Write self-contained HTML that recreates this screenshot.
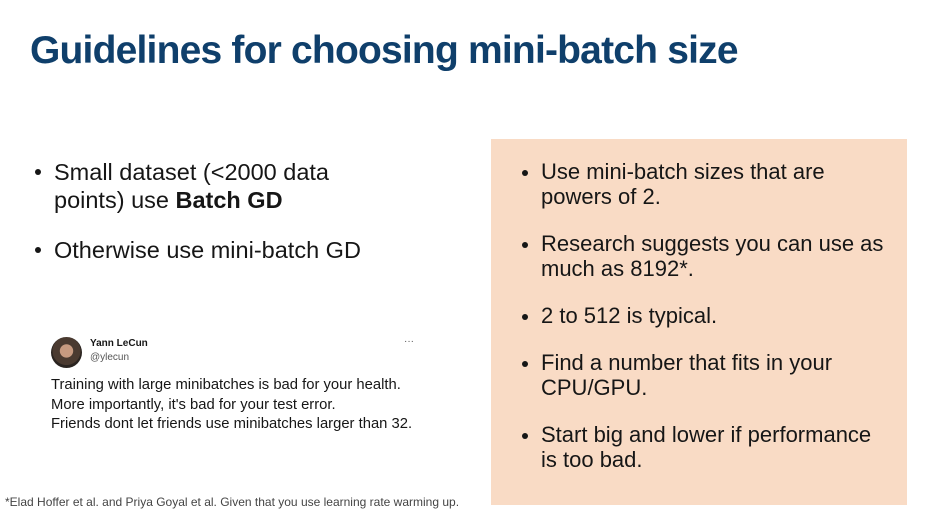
<!DOCTYPE html>
<html><head><meta charset="utf-8"><style>
*{margin:0;padding:0;box-sizing:border-box}
body{width:929px;height:517px;background:#fff;position:relative;overflow:hidden;font-family:"Liberation Sans","DejaVu Sans",sans-serif;color:#161616}
.t{position:absolute;white-space:nowrap}
h1{position:absolute;left:30px;top:29px;font-size:39px;font-weight:bold;color:#0f3f6b;white-space:nowrap;letter-spacing:-0.8px}
.box{position:absolute;left:491px;top:139px;width:416px;height:366px;background:#f9dbc5}
ul{position:absolute;list-style:none}
li{position:relative;font-size:22px;line-height:25px}
li:before{content:"";position:absolute;left:-19px;top:11px;width:6px;height:6px;border-radius:50%;background:#161616}
</style></head><body>
<h1>Guidelines for choosing mini-batch size</h1>
<div class="box"></div>
<ul style="left:54px;top:158px">
<li style="font-size:23.5px;line-height:28px">Small dataset (&lt;2000 data<br>points) use <b>Batch GD</b></li>
<li style="font-size:23.5px;line-height:28px;margin-top:22px">Otherwise use mini-batch GD</li>
</ul>
<ul style="left:541px;top:159px">
<li>Use mini-batch sizes that are<br>powers of 2.</li>
<li style="margin-top:22px">Research suggests you can use as<br>much as 8192*.</li>
<li style="margin-top:22px">2 to 512 is typical.</li>
<li style="margin-top:22px">Find a number that fits in your<br>CPU/GPU.</li>
<li style="margin-top:22px">Start big and lower if performance<br>is too bad.</li>
</ul>
<div class="t" style="left:51px;top:337px;width:31px;height:31px;border-radius:50%;background:radial-gradient(circle at 50% 45%,#c79a80 0 28%,#4a3a30 30% 60%,#2a2420 62%)"></div>
<div class="t" style="left:90px;top:338px;font-size:10px;font-weight:bold">Yann LeCun</div>
<div class="t" style="left:90px;top:352px;font-size:10px;color:#555">@ylecun</div>
<div class="t" style="left:404px;top:336px;font-size:10px;color:#555">···</div>
<div class="t" style="left:51px;top:376px;font-size:14.8px;line-height:19.5px">Training with large minibatches is bad for your health.<br>More importantly, it's bad for your test error.<br>Friends dont let friends use minibatches larger than 32.</div>
<div class="t" style="left:5px;top:495px;font-size:12px;color:#444">*Elad Hoffer et al. and Priya Goyal et al. Given that you use learning rate warming up.</div>
</body></html>
